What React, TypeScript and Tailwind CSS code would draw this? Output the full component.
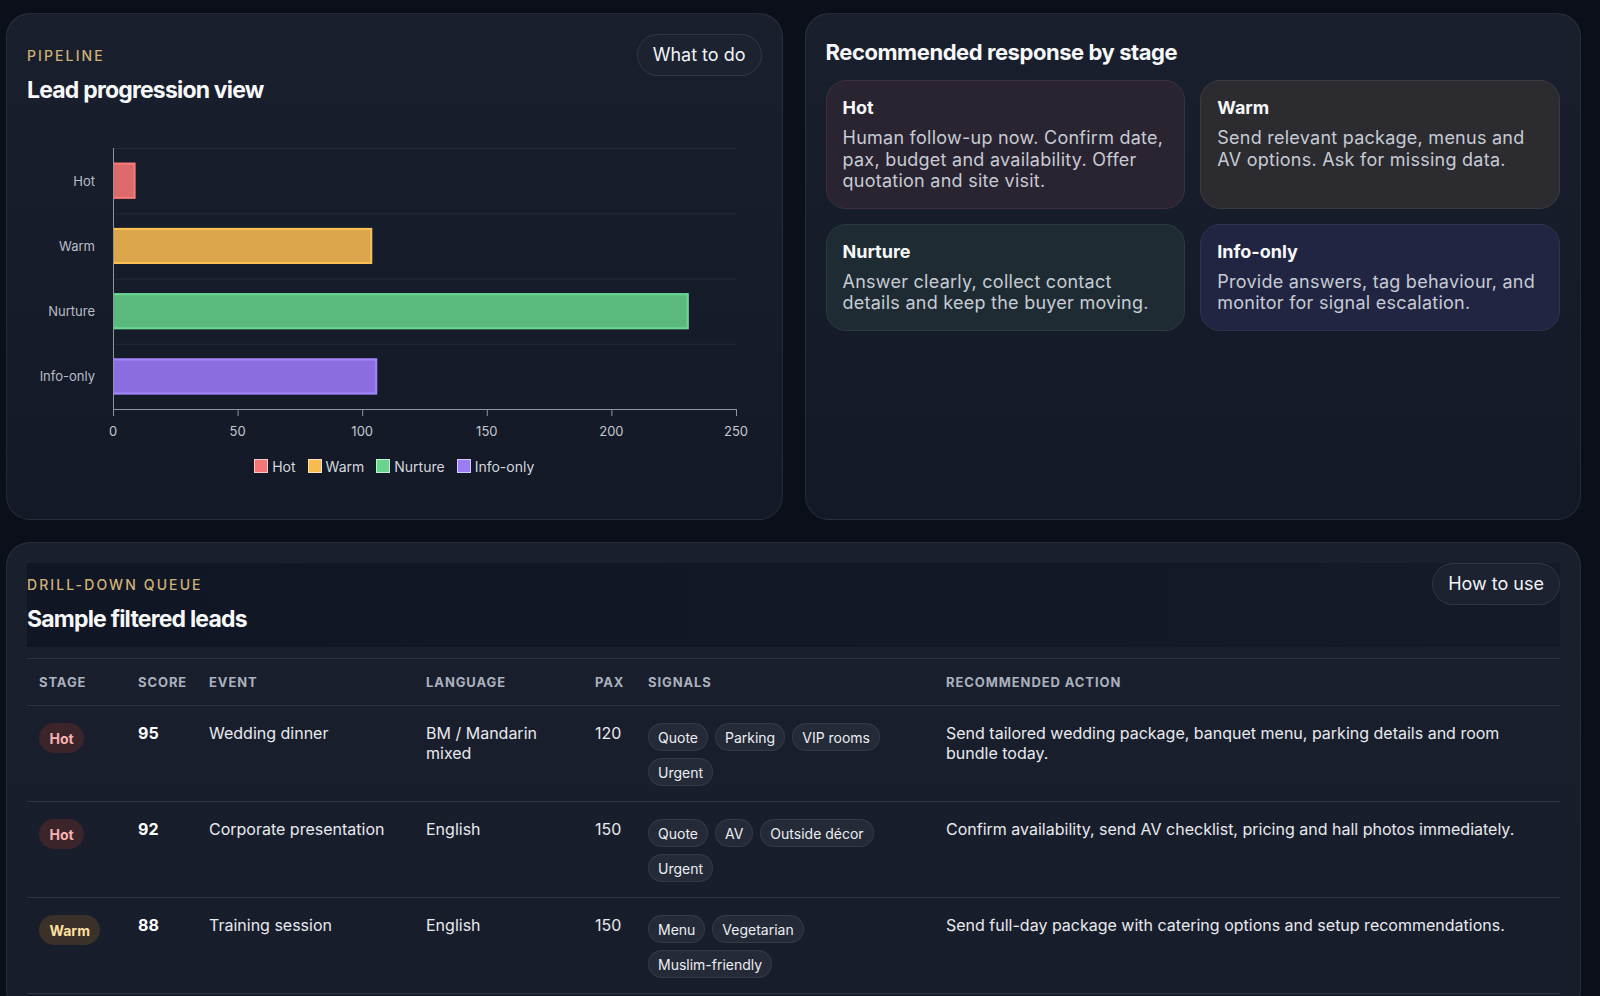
import React from 'react';

const bars = [
  { label: 'Hot', value: 9, fill: '#dc6a6a', stroke: '#f87878', box: '#f47676' },
  { label: 'Warm', value: 104, fill: '#dca64c', stroke: '#fbbf52', box: '#f8bb50' },
  { label: 'Nurture', value: 231, fill: '#5bb97e', stroke: '#6ad892', box: '#68d48f' },
  { label: 'Info-only', value: 106, fill: '#8a6ee0', stroke: '#a386fb', box: '#9b7ef5' },
];

const cards = [
  {
    title: 'Hot',
    body: 'Human follow-up now. Confirm date, pax, budget and availability. Offer quotation and site visit.',
    cls: 'bg-[#2a2430] border-[#3a323f]',
  },
  {
    title: 'Warm',
    body: 'Send relevant package, menus and AV options. Ask for missing data.',
    cls: 'bg-[#2b2b30] border-[#3a3a40]',
  },
  {
    title: 'Nurture',
    body: 'Answer clearly, collect contact details and keep the buyer moving.',
    cls: 'bg-[#1f2b32] border-[#2d3a41]',
  },
  {
    title: 'Info-only',
    body: 'Provide answers, tag behaviour, and monitor for signal escalation.',
    cls: 'bg-[#212541] border-[#30344f]',
  },
];

const rows = [
  {
    stage: 'Hot',
    score: 95,
    event: 'Wedding dinner',
    lang: 'BM / Mandarin mixed',
    pax: 120,
    signals: ['Quote', 'Parking', 'VIP rooms', 'Urgent'],
    action: 'Send tailored wedding package, banquet menu, parking details and room bundle today.',
  },
  {
    stage: 'Hot',
    score: 92,
    event: 'Corporate presentation',
    lang: 'English',
    pax: 150,
    signals: ['Quote', 'AV', 'Outside décor', 'Urgent'],
    action: 'Confirm availability, send AV checklist, pricing and hall photos immediately.',
  },
  {
    stage: 'Warm',
    score: 88,
    event: 'Training session',
    lang: 'English',
    pax: 150,
    signals: ['Menu', 'Vegetarian', 'Muslim-friendly'],
    action: 'Send full-day package with catering options and setup recommendations.',
  },
];

function Eyebrow({ children }: { children: React.ReactNode }) {
  return (
    <div className="text-[14px] leading-[20px] tracking-[0.15em] uppercase text-[#cfb277] font-medium">
      {children}
    </div>
  );
}

function PillButton({ children }: { children: React.ReactNode }) {
  return (
    <button className="h-[42px] px-[15px] rounded-full border border-white/[0.09] bg-[#1c2230] text-[18px] text-[#f1f3f6] leading-none shrink-0">
      {children}
    </button>
  );
}

function Chart() {
  const plotL = 86;
  const plotR = 709;
  const plotT = 42;
  const plotB = 303;
  const band = (plotB - plotT) / 4;
  const scale = (plotR - plotL) / 250;
  const barH = 36;
  const ticks = [0, 50, 100, 150, 200, 250];
  return (
    <svg width="735" height="339" viewBox="0 0 735 339" className="block">
      {[0, 1, 2, 3].map((i) => (
        <line
          key={i}
          x1={plotL}
          x2={plotR}
          y1={plotT + i * band + 0.5}
          y2={plotT + i * band + 0.5}
          stroke="#252b39"
          strokeWidth="1"
        />
      ))}
      {bars.map((b, i) => {
        const y = plotT + i * band + (band - barH) / 2;
        const w = b.value * scale;
        return (
          <g key={b.label}>
            <rect x={plotL} y={y} width={w} height={barH} fill={b.fill} />
            <path
              d={`M${plotL} ${y + 1} H${plotL + w - 1} V${y + barH - 1} H${plotL}`}
              fill="none"
              stroke={b.stroke}
              strokeWidth="2"
            />
            <text
              x={68}
              y={plotT + i * band + band / 2}
              textAnchor="end"
              dominantBaseline="central"
              fontSize="13"
              fill="#b9bdc8"
              fontFamily="Inter, sans-serif"
            >
              {b.label}
            </text>
          </g>
        );
      })}
      <line x1={plotL + 0.5} x2={plotL + 0.5} y1={plotT} y2={plotB + 7} stroke="#8e94a0" strokeWidth="1" />
      <line x1={plotL} x2={plotR + 0.5} y1={plotB + 0.5} y2={plotB + 0.5} stroke="#8e94a0" strokeWidth="1" />
      {ticks.map((t) => {
        const x = plotL + t * scale;
        return (
          <g key={t}>
            <line x1={x + 0.5} x2={x + 0.5} y1={plotB} y2={plotB + 7} stroke="#8e94a0" strokeWidth="1" />
            <text
              x={x}
              y={325}
              textAnchor="middle"
              dominantBaseline="central"
              fontSize="13"
              fill="#c4c7d0"
              fontFamily="Inter, sans-serif"
            >
              {t}
            </text>
          </g>
        );
      })}
    </svg>
  );
}

function Badge({ stage }: { stage: string }) {
  const cls = stage === 'Hot' ? 'bg-[#3b242a] text-[#f5b0b0]' : 'bg-[#3a3129] text-[#fde0a0]';
  return (
    <div className="flex">
      <span className={`h-[30px] px-[10.5px] rounded-full text-[14px] font-bold flex items-center ${cls}`}>{stage}</span>
    </div>
  );
}

export default function App() {
  return (
    <div className="min-h-screen bg-[#0b0f19] pl-[6px] pr-[19px] pt-[13px] pb-[20px] font-['Inter',sans-serif] text-white">
      <div className="grid grid-cols-2 gap-[22px]">
        {/* Left panel */}
        <section className="rounded-[24px] border border-white/[0.07] bg-linear-to-b from-[#1a1f2d] to-[#141927] p-[20px] flex flex-col">
          <div className="h-[72px] flex justify-between items-start">
            <div className="pt-[12px]">
              <Eyebrow>Pipeline</Eyebrow>
              <h2 className="mt-[8px] text-[23px] leading-[32px] font-bold tracking-[-0.035em] text-[#f7f8fa]">
                Lead progression view
              </h2>
            </div>
            <PillButton>What to do</PillButton>
          </div>
          <Chart />
          <div className="mt-[11px] mb-[23px] h-[20px] flex justify-center items-center gap-[12px] text-[14px] text-[#d4d7de]">
            {bars.map((b) => (
              <div key={b.label} className="flex items-center gap-[4px]">
                <span
                  className="w-[14px] h-[14px] border-[1.5px] border-white/60 block"
                  style={{ backgroundColor: b.box }}
                />
                <span>{b.label}</span>
              </div>
            ))}
          </div>
        </section>

        {/* Right panel */}
        <section className="rounded-[24px] border border-white/[0.07] bg-linear-to-b from-[#1a1f2d] to-[#141927] p-[20px]">
          <h2 className="pt-[4px] text-[22px] leading-[28px] font-bold tracking-[-0.02em] text-[#f7f8fa]">
            Recommended response by stage
          </h2>
          <div className="mt-[14px] grid grid-cols-2 gap-x-[15px] gap-y-[15px]">
            {cards.map((c) => (
              <div key={c.title} className={`rounded-[20px] border p-[16px] ${c.cls}`}>
                <div className="text-[18px] leading-[22px] font-bold text-[#f7f8fa]">{c.title}</div>
                <p className="mt-[8px] text-[18px] leading-[21.5px] tracking-[0.014em] text-[#c6cbd5]">{c.body}</p>
              </div>
            ))}
          </div>
        </section>
      </div>

      {/* Bottom panel */}
      <section className="mt-[22px] rounded-[24px] border border-white/[0.07] bg-linear-to-b from-[#1a1f2d] to-[#181d2b] p-[20px]">
        <div className="h-[84px] flex justify-between items-start bg-linear-to-r from-[#111625] to-[#141a28]">
          <div className="pt-[12px]">
            <Eyebrow>Drill-down queue</Eyebrow>
            <h2 className="mt-[8px] text-[23px] leading-[32px] font-bold tracking-[-0.035em] text-[#f7f8fa]">
              Sample filtered leads
            </h2>
          </div>
          <PillButton>How to use</PillButton>
        </div>
        <table className="mt-[11px] w-full table-fixed border-collapse">
          <colgroup>
            <col className="w-[99px]" />
            <col className="w-[71px]" />
            <col className="w-[217px]" />
            <col className="w-[169px]" />
            <col className="w-[53px]" />
            <col className="w-[298px]" />
            <col />
          </colgroup>
          <thead>
            <tr className="border-y border-[#2c3343]">
              {['Stage', 'Score', 'Event', 'Language', 'Pax', 'Signals', 'Recommended action'].map((h) => (
                <th
                  key={h}
                  className="px-[12px] py-[13px] text-left text-[13px] leading-[20px] font-bold uppercase tracking-[0.07em] text-[#aab1bf]"
                >
                  {h}
                </th>
              ))}
            </tr>
          </thead>
          <tbody>
            {rows.map((r, i) => (
              <tr key={i} className="border-b border-[#2c3343] align-top">
                <td className="px-[12px] pt-[17px] pb-[15px]">
                  <Badge stage={r.stage} />
                </td>
                <td className="px-[12px] pt-[17px] pb-[15px] text-[16px] leading-[20px] font-bold text-white">
                  {r.score}
                </td>
                <td className="px-[12px] pt-[17px] pb-[15px] text-[16px] leading-[20px] text-[#e8eaee]">{r.event}</td>
                <td className="px-[12px] pt-[17px] pb-[15px] text-[16px] leading-[20px] text-[#e8eaee]">{r.lang}</td>
                <td className="px-[12px] pt-[17px] pb-[15px] text-[16px] leading-[20px] text-[#e8eaee]">{r.pax}</td>
                <td className="px-[12px] pt-[17px] pb-[15px]">
                  <div className="flex flex-wrap gap-x-[7px] gap-y-[7px]">
                    {r.signals.map((s) => (
                      <span
                        key={s}
                        className="h-[28px] px-[9px] rounded-full border border-white/[0.08] bg-[#242a37] text-[14px] text-[#eceef2] flex items-center"
                      >
                        {s}
                      </span>
                    ))}
                  </div>
                </td>
                <td className="px-[12px] pt-[17px] pb-[15px] text-[16px] leading-[20px] text-[#e8eaee]">{r.action}</td>
              </tr>
            ))}
          </tbody>
        </table>
      </section>
    </div>
  );
}
